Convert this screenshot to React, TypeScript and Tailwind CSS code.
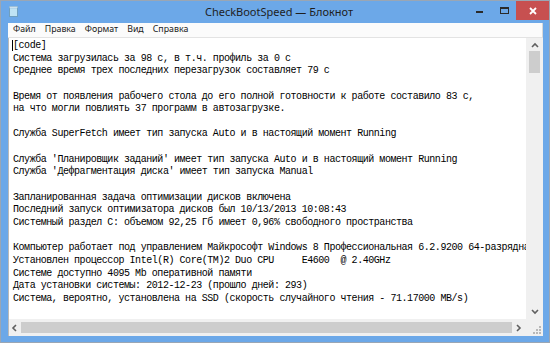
import React from "react"

const lines = [
  "[code]",
  "Система загрузилась за 98 с, в т.ч. профиль за 0 с",
  "Среднее время трех последних перезагрузок составляет 79 с",
  "",
  "Время от появления рабочего стола до его полной готовности к работе составило 83 с,",
  "на что могли повлиять 37 программ в автозагрузке.",
  "",
  "Служба SuperFetch имеет тип запуска Auto и в настоящий момент Running",
  "",
  "Служба 'Планировщик заданий' имеет тип запуска Auto и в настоящий момент Running",
  "Служба 'Дефрагментация диска' имеет тип запуска Manual",
  "",
  "Запланированная задача оптимизации дисков включена",
  "Последний запуск оптимизатора дисков был 10/13/2013 10:08:43",
  "Системный раздел C: объемом 92,25 Гб имеет 0,96% свободного пространства",
  "",
  "Компьютер работает под управлением Майкрософт Windows 8 Профессиональная 6.2.9200 64-разрядная",
  "Установлен процессор Intel(R) Core(TM)2 Duo CPU     E4600  @ 2.40GHz",
  "Системе доступно 4095 Mb оперативной памяти",
  "Дата установки системы: 2012-12-23 (прошло дней: 293)",
  "Система, вероятно, установлена на SSD (скорость случайного чтения - 71.17000 MB/s)",
]

const menu = ["Файл", "Правка", "Формат", "Вид", "Справка"]

function Chevron({ dir }: { dir: "up" | "down" | "left" | "right" }) {
  const d = {
    up: "M1 5 L4 2 L7 5",
    down: "M1 2 L4 5 L7 2",
    left: "M5 1 L2 4 L5 7",
    right: "M2 1 L5 4 L2 7",
  }[dir]
  return (
    <svg width="8" height="8" viewBox="0 0 8 8">
      <path d={d} fill="none" stroke="#606060" strokeWidth="1.6" />
    </svg>
  )
}

export default function App() {
  return (
    <div className="w-[550px] h-[343px] bg-[#6ca8e8] border border-[#9aa6b4] flex flex-col overflow-hidden" style={{ fontFamily: "'Noto Sans', 'Open Sans', sans-serif" }}>
      {/* title bar */}
      <div className="h-[21px] flex items-center">
        <div className="flex-1 basis-0 pl-[8px] flex items-center">
          <svg width="9" height="11" viewBox="0 0 9 11">
            <rect x="0.5" y="1" width="8" height="9.5" fill="#bfe3f4" stroke="#6f9fbf" />
            <rect x="0.5" y="0.5" width="8" height="1.5" fill="#e8f4fb" stroke="#8fb6cf" strokeWidth="0.6" />
          </svg>
        </div>
        <div className="text-[11px] text-[#1e1e1e] pt-[2px] whitespace-nowrap">CheckBootSpeed — Блокнот</div>
        <div className="flex-1 basis-0 flex justify-end items-start h-full">
          <div className="w-[26px] h-[19px] flex items-center justify-center">
            <div className="w-[7px] h-[2px] bg-[#2a2a2a] mt-[3px]" />
          </div>
          <div className="w-[24px] h-[19px] flex items-center justify-center">
            <div className="w-[9px] h-[7px] border border-[#2a2a2a] border-t-2" />
          </div>
          <div className="w-[33px] h-[19px] bg-[#c75050] flex items-center justify-center">
            <svg width="8" height="8" viewBox="0 0 8 8">
              <path d="M1 1 L7 7 M7 1 L1 7" stroke="#fff" strokeWidth="1.8" />
            </svg>
          </div>
        </div>
      </div>

      {/* client area */}
      <div className="flex-1 flex flex-col ml-[7px] mr-[6px] mt-[1px] mb-[6px] bg-white">
        <div className="h-[15px] flex items-center gap-[9px] pl-[5px] bg-[#fbfbfb] border-b border-[#e3e3e3] border-r border-r-[#d9d9d9] text-[8.8px] text-[#1a1a1a]">
          {menu.map((m) => (
            <span key={m}>{m}</span>
          ))}
        </div>
        <div className="flex-1 flex min-h-0 border-l border-[#b9b9b9]">
          <div
            className="flex-1 overflow-hidden whitespace-pre text-[10px] leading-[12.65px] tracking-[-0.45px] text-black pl-[4px] pt-[2px]"
            style={{ fontFamily: "'Liberation Mono', 'DejaVu Sans Mono', monospace" }}
          >
            {lines.map((l, i) => (
              <div key={i} className="h-[12.65px]">
                {i === 0 && <span className="inline-block w-[1px] h-[11px] bg-black align-middle -ml-[1px]" />}
                {l}
              </div>
            ))}
          </div>
          <div className="w-[17px] bg-[#f0f0f0] flex flex-col items-center">
            <div className="h-[13px] flex items-center justify-center pt-[2px]">
              <Chevron dir="up" />
            </div>
            <div className="w-[11px] h-[22px] bg-[#cdcdcd]" />
            <div className="flex-1" />
            <div className="h-[14px] flex items-center justify-center">
              <Chevron dir="down" />
            </div>
          </div>
        </div>
        <div className="h-[17px] flex bg-[#f0f0f0] border-l border-[#b9b9b9]">
          <div className="w-[12px] flex items-center justify-center">
            <Chevron dir="left" />
          </div>
          <div className="flex-1 flex items-center">
            <div className="h-[11px] w-full bg-[#cdcdcd]" />
          </div>
          <div className="w-[14px] flex items-center justify-center">
            <Chevron dir="right" />
          </div>
          <div className="w-[17px] flex items-end justify-end p-[2px]">
            <svg width="8" height="8" viewBox="0 0 8 8">
              <g fill="#b8b8b8">
                <rect x="6" y="0" width="2" height="2" />
                <rect x="3" y="3" width="2" height="2" />
                <rect x="6" y="3" width="2" height="2" />
                <rect x="0" y="6" width="2" height="2" />
                <rect x="3" y="6" width="2" height="2" />
                <rect x="6" y="6" width="2" height="2" />
              </g>
            </svg>
          </div>
        </div>
      </div>
    </div>
  )
}
